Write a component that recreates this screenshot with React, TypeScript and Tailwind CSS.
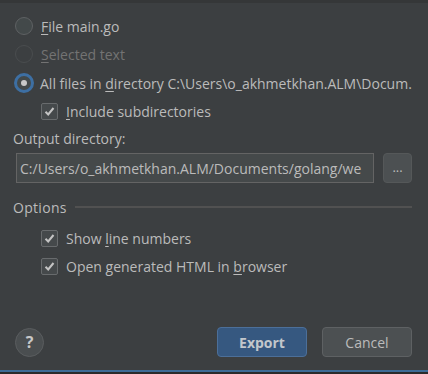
import React from "react";

const font = { fontFamily: '"Open Sans", "Noto Sans", sans-serif' };

function Radio({ checked, disabled }: { checked?: boolean; disabled?: boolean }) {
  if (checked) {
    return (
      <div className="w-[20px] h-[20px] rounded-full border-[3px] border-[#3d6fa3] bg-[#43494a] flex items-center justify-center shrink-0">
        <div className="w-[6px] h-[6px] rounded-full bg-[#c8c8c8]" />
      </div>
    );
  }
  return (
    <div
      className={
        "w-[18px] h-[18px] rounded-full border shrink-0 " +
        (disabled ? "border-[#4a4d4f] bg-[#3c3f41]" : "border-[#5e6163] bg-[#43494a]")
      }
    />
  );
}

function Check() {
  return (
    <div className="w-[17px] h-[17px] rounded-[2px] border border-[#686b6d] bg-[#45494b] flex items-center justify-center shrink-0">
      <svg width="13" height="13" viewBox="0 0 13 13">
        <path d="M2.5 6.8 L5.2 9.5 L10.5 3" fill="none" stroke="#c4c4c4" strokeWidth="2" />
      </svg>
    </div>
  );
}

function U({ children }: { children: React.ReactNode }) {
  return <span className="underline underline-offset-[2px] decoration-1">{children}</span>;
}

export default function App() {
  return (
    <div className="w-[428px] h-[374px] bg-[#3c3f41] text-[#bbbbbb] text-[14px] relative overflow-hidden flex flex-col" style={font}>
      <div className="h-[3px] bg-[#353738] shrink-0" />
      <div className="flex flex-col pl-[15px] pr-[16px] flex-1">
        <div className="flex items-center gap-[8px] h-[20px] mt-[13px]">
          <Radio />
          <span><U>F</U>ile main.go</span>
        </div>
        <div className="flex items-center gap-[8px] h-[20px] mt-[8px] text-[#737373]">
          <Radio disabled />
          <span><U>S</U>elected text</span>
        </div>
        <div className="flex items-center gap-[6px] h-[20px] mt-[9px] -ml-[1px]">
          <Radio checked />
          <span className="whitespace-nowrap">All files in <U>d</U>irectory C:\Users\o_akhmetkhan.ALM\Docum.</span>
        </div>
        <div className="flex items-center gap-[8px] h-[20px] mt-[8px] pl-[26px]">
          <Check />
          <span><U>I</U>nclude subdirectories</span>
        </div>
        <div className="mt-[7px] -ml-[2px] h-[20px] flex items-center">Output directory:</div>
        <div className="flex items-center mt-[5px] gap-[9px]">
          <div className="w-[358px] h-[30px] border border-[#646464] bg-[#45494a] flex items-center pl-[3px] overflow-hidden whitespace-nowrap ml-[1px]">
            C:/Users/o_akhmetkhan.ALM/Documents/golang/we
          </div>
          <div className="w-[29px] h-[30px] rounded-[4px] border border-[#555859] bg-[#4c5052] flex items-center justify-center text-[13px]">
            ...
          </div>
        </div>
        <div className="flex items-center mt-[14px] h-[20px] -ml-[2px]">
          <span className="mr-[8px] tracking-[0.3px]">Options</span>
          <div className="flex-1 h-[2px] bg-[#515151]" />
        </div>
        <div className="flex items-center gap-[8px] h-[20px] mt-[11px] pl-[26px]">
          <Check />
          <span>Show <U>l</U>ine numbers</span>
        </div>
        <div className="flex items-center gap-[8px] h-[20px] mt-[8px] pl-[26px]">
          <Check />
          <span>Open generated HTML in <U>b</U>rowser</span>
        </div>
        <div className="flex-1" />
        <div className="flex items-center mb-[13px]">
          <div className="w-[29px] h-[29px] rounded-full border border-[#5a5d5f] bg-[#4a4e50] flex items-center justify-center text-[16px] font-bold text-[#c8c8c8]">
            ?
          </div>
          <div className="flex-1" />
          <div className="w-[90px] h-[30px] rounded-[4px] bg-[#365880] border border-[#4c6f99] flex items-center justify-center font-bold text-[#c2c7cc]">
            Export
          </div>
          <div className="w-[90px] h-[30px] rounded-[4px] bg-[#4c5052] border border-[#5e6163] flex items-center justify-center ml-[15px]">
            Cancel
          </div>
        </div>
      </div>
      <div className="h-[2px] bg-[#3d6b96] shrink-0" />
      <div className="h-[2px] bg-[#2b2b2b] shrink-0" />
    </div>
  );
}
